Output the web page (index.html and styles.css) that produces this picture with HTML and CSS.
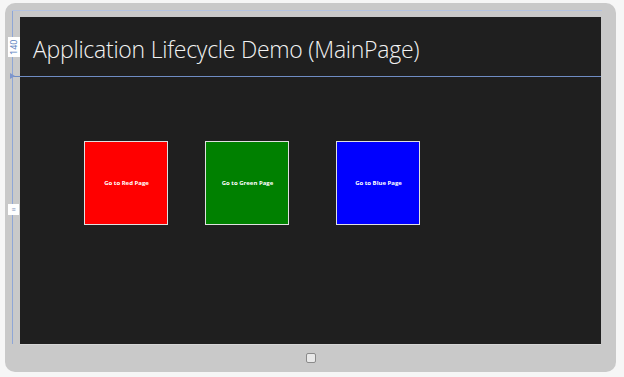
FILE: index.html
```html
<!DOCTYPE html>
<html lang="en">
<head>
  <meta charset="UTF-8">
  <title>Application Lifecycle Demo</title>
  <link rel="stylesheet" href="styles.css">
</head>
<body>

  <div class="device">
    <div class="screen">
      <div class="header">
        <h1 class="title">Application Lifecycle Demo (MainPage)</h1>
      </div>
      <div class="buttons">
        <button class="page-btn red">Go to Red Page</button>
        <button class="page-btn green">Go to Green Page</button>
        <button class="page-btn blue">Go to Blue Page</button>
      </div>
    </div>
    <div class="bottom-bar">
      <div class="home-key"></div>
    </div>

    <!-- designer guides -->
    <div class="guide-v"></div>
    <div class="guide-h"></div>
    <div class="guide-top"></div>
    <div class="guide-arrow"></div>
    <div class="guide-label">140</div>
    <div class="guide-star">≡</div>
  </div>

</body>
</html>
```

FILE: styles.css
```css
body, html {
  margin: 0;
  padding: 0;
  background-color: #f6f6f6;
  font-family: "Open Sans", sans-serif;
}

body {
  padding: 3px 0 0 5px;
}

.device {
  position: relative;
  width: 611px;
  height: 369px;
  background-color: #c9c9c9;
  border-radius: 10px;
  box-sizing: border-box;
  padding: 14px 15px 0 15px;
  display: flex;
  flex-direction: column;
}

.screen {
  height: 327px;
  background-color: #1f1f1f;
  display: flex;
  flex-direction: column;
}

.header {
  height: 59px;
  box-sizing: border-box;
  padding: 17px 0 0 13px;
}

.title {
  margin: 0;
  font-weight: 300;
  font-size: 23px;
  line-height: 30px;
  color: #f2f2f2;
  letter-spacing: -0.25px;
}

.buttons {
  display: flex;
  padding: 65px 0 0 64px;
}

.page-btn {
  width: 84px;
  height: 84px;
  border: 1.5px solid #e0e0e0;
  color: #ffffff;
  font-family: "Open Sans", sans-serif;
  font-weight: 700;
  font-size: 6px;
  padding: 0 0 0 1px;
  cursor: pointer;
}

.red {
  background-color: #ff0000;
}

.green {
  background-color: #008000;
  margin-left: 37px;
}

.blue {
  background-color: #0000ff;
  margin-left: 47px;
}

.bottom-bar {
  flex: 1;
  display: flex;
  justify-content: center;
  align-items: center;
  border-top: 1px solid #d6d6d6;
}

.home-key {
  width: 8px;
  height: 8px;
  border: 1.5px solid #8a8a8a;
  border-radius: 2px;
  background-color: #e8e8e8;
  margin-top: -2px;
}

.guide-v {
  position: absolute;
  left: 7px;
  top: 7px;
  width: 1px;
  height: 334px;
  background-color: #8ea6d6;
}

.guide-h {
  position: absolute;
  left: 5px;
  top: 73px;
  width: 591px;
  height: 1px;
  background-color: #6f8cc4;
}

.guide-top {
  position: absolute;
  left: 7px;
  top: 7px;
  width: 590px;
  height: 1px;
  background-color: #b5c3e0;
}

.guide-arrow {
  position: absolute;
  left: 5px;
  top: 70px;
  width: 0;
  height: 0;
  border-top: 3px solid transparent;
  border-bottom: 3px solid transparent;
  border-left: 5px solid #7d95cc;
}

.guide-label {
  position: absolute;
  left: 3px;
  top: 34px;
  width: 12px;
  height: 20px;
  background-color: #ffffff;
  color: #5a7fc0;
  font-size: 9px;
  line-height: 12px;
  text-align: center;
  writing-mode: vertical-rl;
  transform: rotate(180deg);
}

.guide-star {
  position: absolute;
  left: 3px;
  top: 201px;
  width: 11px;
  height: 11px;
  background-color: #ffffff;
  color: #7a8fb8;
  font-size: 7px;
  line-height: 11px;
  text-align: center;
}
```
